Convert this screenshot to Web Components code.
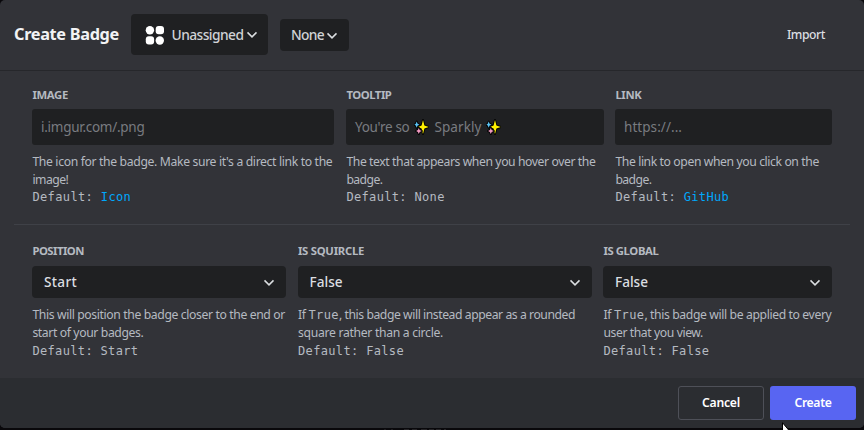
<!DOCTYPE html>
<html lang="en">
<head>
<meta charset="utf-8">
<title>Create Badge</title>
<style>
html,body{margin:0;height:430px;overflow:hidden;background:#09080b}
body{font-family:"Noto Sans","Open Sans",sans-serif;color:#b5bac1}
</style>
</head>
<body>
<badge-dialog></badge-dialog>
<script>
function define(name, html, init) {
  const tpl = document.createElement('template');
  tpl.innerHTML = html;
  customElements.define(name, class extends HTMLElement {
    connectedCallback() {
      if (this.shadowRoot) return;
      this.attachShadow({ mode: 'open' }).append(tpl.content.cloneNode(true));
      if (init) init.call(this, this.shadowRoot);
    }
  });
}

// One line of text, tracked so that it fills the width given in "w".
define('fit-line', `<style>
:host{display:block;white-space:pre}
span{display:inline-block}
</style><span><slot></slot></span>`, function (root) {
  const span = root.querySelector('span');
  const target = parseFloat(this.getAttribute('w'));
  const count = [...this.textContent].length;
  const natural = span.getBoundingClientRect().width;
  const ls = (target - natural) / count;
  if (count && natural) span.style.letterSpacing = ls.toFixed(3) + 'px';
});

define('chevron-icon', `<style>
:host{display:block;width:12px;height:8px;flex:none}
svg{display:block}
</style><svg width="12" height="8" viewBox="0 0 12 8"><path d="M1.5 1.4 6 5.9 10.5 1.4" fill="none" stroke="#dbdee1" stroke-width="1.5"/></svg>`);

define('sparkles-icon', `<style>
:host{display:block;width:15px;height:16px;flex:none}
svg{display:block}
</style><svg width="15" height="16" viewBox="0 0 15 16"><g stroke="#050505" stroke-width="2" stroke-linejoin="round" paint-order="stroke">
<path fill="#fff100" d="M9 1 10.4 6.4 14.8 8 10.4 9.6 9 15 7.6 9.6 4 8 7.6 6.4Z"/>
<path fill="#5bc4f5" d="M2.7 2.6 3.6 4.8 5.5 5.7 3.6 6.6 2.7 8.8 1.8 6.6 .4 5.7 1.8 4.8Z"/>
<path fill="#f29ac2" d="M4.8 9 5.7 11.1 7.7 12 5.7 12.9 4.8 15 3.9 12.9 2.1 12 3.9 11.1Z"/></g></svg>`);

define('menu-button', `<style>
:host{display:flex;align-items:center;box-sizing:border-box;background:#1f2022;border-radius:4px;color:#d0d2d5;font-size:13.8px;font-weight:500;line-height:20px}
chevron-icon{margin-left:2px;margin-top:2px}
::slotted(fit-line){padding-top:var(--text-drop,2px)}
</style><slot></slot><chevron-icon></chevron-icon>`);

define('four-dots', `<style>
:host{display:block;width:19px;height:19px;margin-top:2px}
svg{display:block}
</style><svg width="19" height="19" viewBox="0 0 19 19" fill="#fff"><circle cx="4.9" cy="4.2" r="4.2"/><rect x="10.7" y=".1" width="8.3" height="8.2" rx="3"/><rect x=".8" y="10.3" width="8.3" height="8.3" rx="3"/><circle cx="14.8" cy="14.5" r="4.2"/></svg>`);

define('form-field', `<style>
:host{display:block;box-sizing:border-box}
.label{font-size:11.3px;font-weight:700;line-height:16px;height:var(--label-height,22px)}
.help{font-size:12.2px;line-height:18px;padding-top:var(--help-gap,7px)}
.label,.help{padding-left:.4px}
</style><div class="label"><slot name="label"></slot></div><slot name="control"></slot><div class="help"><slot></slot></div>`);

define('text-box', `<style>
:host{display:flex;align-items:center;height:36px;box-sizing:border-box;padding:0 9px;background:#1f2022;border-radius:3px;color:#797b80;font-size:13.5px;line-height:20px}
</style><slot></slot>`);

define('select-box', `<style>
:host{display:flex;align-items:center;justify-content:space-between;height:32px;box-sizing:border-box;padding:0 11px 0 12px;background:#1f2022;border-radius:4px;color:#dbdee1;font-size:13.6px;font-weight:500;line-height:20px}
chevron-icon{margin-top:2px}
</style><slot></slot><chevron-icon></chevron-icon>`);

define('action-button', `<style>
:host{display:flex;align-items:center;justify-content:center;width:86px;height:34px;box-sizing:border-box;border-radius:3px;color:#fff;font-size:12.2px;font-weight:600;line-height:18px}
:host([kind=outline]){border:1px solid #4e5058}
:host([kind=primary]){background:#5865f2}
</style><slot></slot>`);

define('mouse-pointer', `<style>
:host{display:block;position:absolute;left:782px;top:422px;width:12px;height:8px;overflow:hidden}
svg{display:block}
</style><svg width="12" height="18" viewBox="0 0 12 18"><path d="M.5.7V17l4-3.8h6.5z" fill="#fff" stroke="#000"/></svg>`);

// Tops of a dimmed caption showing under the dialog.
define('backdrop-sliver', `<style>
:host{display:block;position:absolute;left:384px;top:429px;width:62px;height:1px;background:linear-gradient(90deg,#1d1c1f 2px,transparent 2px 7px,#1d1c1f 7px 9px,transparent 9px 20px,#252427 20px 25px,transparent 25px 28px,#252427 28px 33px,transparent 33px 37px,#252427 37px 43px,transparent 43px 45px,#252427 45px 50px,transparent 50px 52px,#252427 52px 57px,transparent 57px 60px,#252427 60px)}
</style>`);

define('badge-dialog', `<style>
:host{display:flex;flex-direction:column;width:864px;height:428px;background:#323338;border-radius:5px;overflow:hidden}
header{display:flex;align-items:center;box-sizing:border-box;height:71px;padding:0 39px 2px 14px;border-bottom:1px solid #26272b;color:#f2f3f5}
.title{font-size:16.3px;font-weight:700;line-height:24px;width:117px;margin-top:-1px}
.assign{width:137px;height:41px;padding:0 11px 0 14px}
.assign fit-line{margin-left:7.5px}
.none{width:69px;height:32px;margin-left:12px;margin-top:1px;padding:0 11px;--text-drop:0px}
.import{margin-left:auto;font-size:12.2px;font-weight:500;color:#dbdee1;padding-top:1px}
main{height:307px}
.row{display:grid;column-gap:12px;margin:0 32px}
.r1{grid-template-columns:302px 258px 217px;padding-top:16px;height:137px}
.r1 form-field{--help-gap:7.6px}
.r1 .mono{margin-top:-1px}
.r1 form-field:nth-child(3){margin-left:-1px;width:217px}
.r2{grid-template-columns:254px 294px 228px;padding-top:18px}
.r2 form-field{--help-gap:8px;--label-height:23px}
.r2 form-field:nth-child(2){margin-left:-.4px}
.r2 form-field:nth-child(3){margin-left:-1px}
hr{margin:0 14px;border:0;height:1px;background:#3f4147}
footer{display:flex;justify-content:flex-end;gap:6px;height:50px;padding:8px 8px 0;box-sizing:border-box;background:#2b2d31}
a{color:#00a8fc;text-decoration:none}
.mono{font-family:"DejaVu Sans Mono","Liberation Mono",monospace;font-size:12px}
.seg{display:flex}
.seg .mono{margin-top:0}
sparkles-icon{margin:0 5px}
</style>
<header>
<fit-line class="title" w="105">Create Badge</fit-line>
<menu-button class="assign"><four-dots></four-dots><fit-line w="72">Unassigned</fit-line></menu-button>
<menu-button class="none"><fit-line w="33">None</fit-line></menu-button>
<fit-line class="import" w="38">Import</fit-line>
</header>
<main>
<div class="row r1">
<form-field><fit-line slot="label" w="35.5">IMAGE</fit-line>
<text-box slot="control"><fit-line w="103.5">i.imgur.com/.png</fit-line></text-box>
<fit-line w="300">The icon for the badge. Make sure it's a direct link to the</fit-line><fit-line w="36">image!</fit-line><fit-line class="mono" w="98.8">Default: <a>Icon</a></fit-line></form-field>
<form-field><fit-line slot="label" w="45">TOOLTIP</fit-line>
<text-box slot="control"><fit-line w="54.5">You're so</fit-line><sparkles-icon></sparkles-icon><fit-line w="47">Sparkly</fit-line><sparkles-icon></sparkles-icon></text-box>
<fit-line w="249">The text that appears when you hover over the</fit-line><fit-line w="36">badge.</fit-line><fit-line class="mono" w="98.3">Default: None</fit-line></form-field>
<form-field><fit-line slot="label" w="26">LINK</fit-line>
<text-box slot="control"><fit-line w="58">https://...</fit-line></text-box>
<fit-line w="203.5">The link to open when you click on the</fit-line><fit-line w="36">badge.</fit-line><fit-line class="mono" w="113.8">Default: <a>GitHub</a></fit-line></form-field>
</div>
<hr>
<div class="row r2">
<form-field><fit-line slot="label" w="51.5">POSITION</fit-line>
<select-box slot="control"><fit-line w="33">Start</fit-line></select-box>
<fit-line w="252.5">This will position the badge closer to the end or</fit-line><fit-line w="111">start of your badges.</fit-line><fit-line class="mono" w="106">Default: Start</fit-line></form-field>
<form-field><fit-line slot="label" w="66">IS SQUIRCLE</fit-line>
<select-box slot="control"><fit-line w="33">False</fit-line></select-box>
<div class="seg"><fit-line w="10.5">If </fit-line><fit-line class="mono" w="30.5">True</fit-line><fit-line w="236">, this badge will instead appear as a rounded</fit-line></div><fit-line w="145">square rather than a circle.</fit-line><fit-line class="mono" w="106">Default: False</fit-line></form-field>
<form-field><fit-line slot="label" w="55">IS GLOBAL</fit-line>
<select-box slot="control"><fit-line w="33">False</fit-line></select-box>
<div class="seg"><fit-line w="10.5">If </fit-line><fit-line class="mono" w="30.5">True</fit-line><fit-line w="187">, this badge will be applied to every</fit-line></div><fit-line w="99.5">user that you view.</fit-line><fit-line class="mono" w="106">Default: False</fit-line></form-field>
</div>
</main>
<footer><action-button kind="outline"><fit-line w="38">Cancel</fit-line></action-button><action-button kind="primary"><fit-line w="37">Create</fit-line></action-button></footer>
<backdrop-sliver></backdrop-sliver><mouse-pointer></mouse-pointer>`);
</script>
</body>
</html>
